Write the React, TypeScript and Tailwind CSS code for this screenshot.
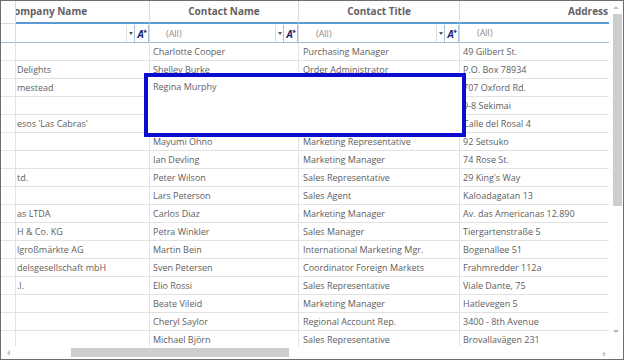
const rows: [string, string, string, string][] = [
  ["", "Charlotte Cooper", "Purchasing Manager", "49 Gilbert St."],
  ["Delights", "Shelley Burke", "Order Administrator", "P.O. Box 78934"],
  ["mestead", "", "", "707 Oxford Rd."],
  ["", "", "", "9-8 Sekimai"],
  ["esos 'Las Cabras'", "", "", "Calle del Rosal 4"],
  ["", "Mayumi Ohno", "Marketing Representative", "92 Setsuko"],
  ["", "Ian Devling", "Marketing Manager", "74 Rose St."],
  ["td.", "Peter Wilson", "Sales Representative", "29 King's Way"],
  ["", "Lars Peterson", "Sales Agent", "Kaloadagatan 13"],
  ["as LTDA", "Carlos Diaz", "Marketing Manager", "Av. das Americanas 12.890"],
  ["H & Co. KG", "Petra Winkler", "Sales Manager", "Tiergartenstraße 5"],
  ["lgroßmärkte AG", "Martin Bein", "International Marketing Mgr.", "Bogenallee 51"],
  ["delsgesellschaft mbH", "Sven Petersen", "Coordinator Foreign Markets", "Frahmredder 112a"],
  [".l.", "Elio Rossi", "Sales Representative", "Viale Dante, 75"],
  ["", "Beate Vileid", "Marketing Manager", "Hatlevegen 5"],
  ["", "Cheryl Saylor", "Regional Account Rep.", "3400 - 8th Avenue"],
  ["", "Michael Björn", "Sales Representative", "Brovallavägen 231"],
];

function FilterControls() {
  return (
    <div className="flex h-full items-stretch">
      {/* dropdown */}
      <div className="w-[8px] flex items-center justify-center bg-white border-l border-[#d6dee8]">
        <span className="block w-0 h-0 border-l-[2px] border-r-[2px] border-t-[3px] border-l-transparent border-r-transparent border-t-[#555]" />
      </div>
      {/* operator */}
      <div className="w-[15px] flex items-center justify-center border-x border-[#a9bfdb] bg-white">
        <span className="italic font-bold text-[10px] leading-none text-[#1b2168] tracking-[-1px]">
          A<span className="text-[7px] align-top">*</span>
        </span>
      </div>
    </div>
  );
}

export default function App() {
  return (
    <div
      className="w-[624px] h-[360px] bg-white border border-[#6e6e6e] flex flex-col overflow-hidden relative text-[#5e5e5e]"
      style={{ fontFamily: '"Open Sans", "Noto Sans", sans-serif' }}
    >
      <div className="flex h-[345px]">
        {/* Grid */}
        <div className="w-[608px] overflow-hidden">
          {/* Header */}
          <div className="grid grid-cols-[15px_134px_149px_161px_149px] h-[23px]">
            <div className="border-r border-b border-[#dadada]" />
            <div className="border-r border-[#dadada] border-b-2 border-b-[#5c9ad6] overflow-hidden flex items-center">
              <span className="ml-[-2px] text-[10px] font-bold text-[#626262] whitespace-nowrap">ompany Name</span>
            </div>
            <div className="border-r border-[#dadada] border-b-2 border-b-[#5c9ad6] flex items-center justify-center">
              <span className="text-[10px] font-bold text-[#626262]">Contact Name</span>
            </div>
            <div className="border-r border-[#dadada] border-b-2 border-b-[#5c9ad6] flex items-center justify-center">
              <span className="text-[10px] font-bold text-[#626262]">Contact Title</span>
            </div>
            <div className="border-b-2 border-b-[#5c9ad6] flex items-center justify-end pr-[1px]">
              <span className="text-[10px] font-bold text-[#626262]">Address</span>
            </div>
          </div>

          {/* Filter row */}
          <div className="grid grid-cols-[15px_134px_149px_161px_149px] h-[19px] text-[9px]">
            <div className="border-r border-[#dadada] border-b border-b-[#a4bbd6]" />
            <div className="border-r border-[#dadada] border-b border-b-[#a4bbd6] flex pt-[1px]">
              <div className="flex-1" />
              <FilterControls />
            </div>
            <div className="border-r border-[#dadada] border-b border-b-[#a4bbd6] flex pt-[1px]">
              <div className="flex-1 flex items-center pl-[16px] text-[#8c8c8c]">(All)</div>
              <FilterControls />
            </div>
            <div className="border-r border-[#dadada] border-b border-b-[#a4bbd6] flex pt-[1px]">
              <div className="flex-1 flex items-center pl-[17px] text-[#8c8c8c]">(All)</div>
              <FilterControls />
            </div>
            <div className="border-b border-b-[#a4bbd6] flex items-center pl-[17px] text-[#8c8c8c]">(All)</div>
          </div>

          {/* Data rows */}
          {rows.map((r, i) => (
            <div
              key={i}
              className="grid grid-cols-[15px_134px_149px_161px_149px] h-[18px] text-[9px] whitespace-nowrap"
            >
              <div className="border-r border-b border-[#e2e2e2]" />
              <div className="border-r border-b border-[#e2e2e2] pl-[1px] flex items-center overflow-hidden">{r[0]}</div>
              <div className="border-r border-b border-[#e2e2e2] pl-[3px] flex items-center overflow-hidden">{r[1]}</div>
              <div className="border-r border-b border-[#e2e2e2] pl-[4px] flex items-center overflow-hidden">{r[2]}</div>
              <div className="border-b border-[#e2e2e2] pl-[3px] flex items-center overflow-hidden">{r[3]}</div>
            </div>
          ))}
        </div>

        {/* Vertical scrollbar */}
        <div className="w-[14px] flex flex-col items-center">
          <div className="h-[13px] flex items-center justify-center">
            <span className="block w-0 h-0 border-l-[3px] border-r-[3px] border-b-[3px] border-l-transparent border-r-transparent border-b-[#c4c4c4]" />
          </div>
          <div className="w-[9px] h-[192px] bg-[#cdcdcd] ml-[2px]" />
          <div className="flex-1" />
          <div className="h-[16px] flex items-start justify-center">
            <span className="block w-0 h-0 border-l-[3px] border-r-[3px] border-t-[3px] border-l-transparent border-r-transparent border-t-[#b4b4b4]" />
          </div>
        </div>
      </div>

      {/* Horizontal scrollbar */}
      <div className="flex-1 flex items-center">
        <div className="w-[14px] flex justify-center">
          <span className="block w-0 h-0 border-t-[3px] border-b-[3px] border-r-[3px] border-t-transparent border-b-transparent border-r-[#c4c4c4]" />
        </div>
        <div className="ml-[56px] w-[218px] h-[9px] bg-[#cdcdcd]" />
        <div className="flex-1" />
        <div className="w-[22px] flex justify-start pl-[2px] mt-[2px]">
          <span className="block w-0 h-0 border-t-[3px] border-b-[3px] border-l-[3px] border-t-transparent border-b-transparent border-l-[#c4c4c4]" />
        </div>
      </div>

      {/* Selection / drag box */}
      <div className="absolute left-[143px] top-[72px] w-[322px] h-[64px] border-4 border-[#0c0cd0] bg-white">
        <div className="h-[18px] mt-[1px] pl-[5px] flex items-center text-[9px]">Regina Murphy</div>
      </div>
    </div>
  );
}
